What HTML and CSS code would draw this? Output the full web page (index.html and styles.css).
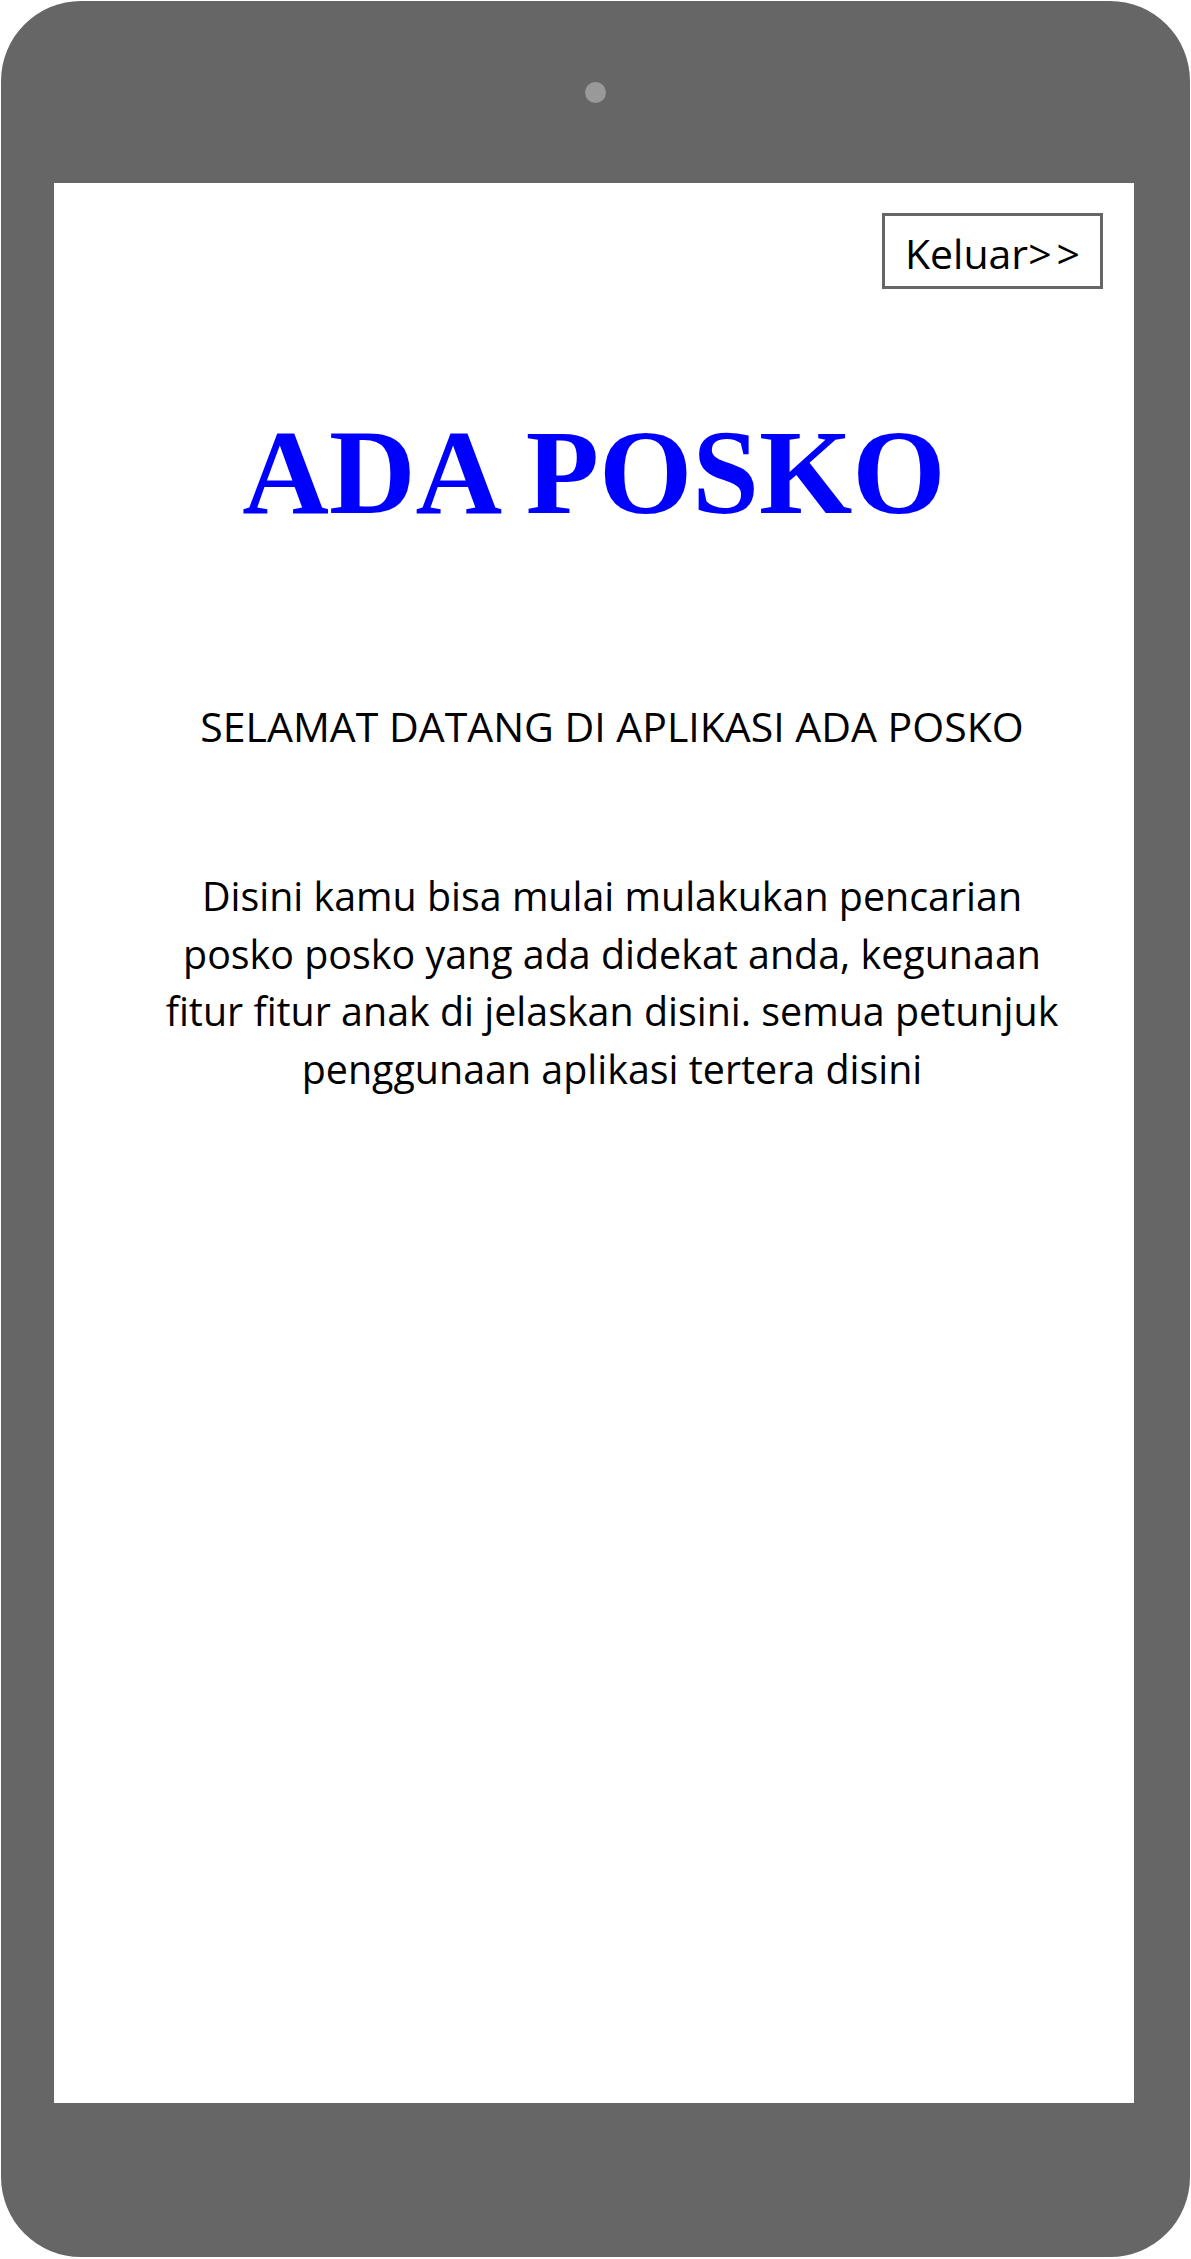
FILE: index.html
```html
<!DOCTYPE html>
<html lang="id">
<head>
<meta charset="utf-8">
<title>ADA POSKO</title>
<link rel="stylesheet" href="styles.css">
</head>
<body>
<div class="phone">
  <div class="camera"></div>
  <div class="screen">
    <div class="topbar">
      <button class="logout">Keluar<span class="gap">&gt;</span>&gt;</button>
    </div>
    <h1 class="title">ADA POSKO</h1>
    <div class="info">
      <p class="welcome">SELAMAT DATANG DI APLIKASI ADA POSKO</p>
      <p class="desc">Disini kamu bisa mulai mulakukan pencarian<br>posko posko yang ada didekat anda, kegunaan<br>fitur fitur anak di jelaskan disini. semua petunjuk<br>penggunaan aplikasi tertera disini</p>
    </div>
  </div>
</div>
</body>
</html>
```

FILE: styles.css
```css
html, body {
  margin: 0;
  padding: 0;
  background: #ffffff;
}

body {
  padding: 1px 0 0 1px;
  font-family: "Open Sans", "Noto Sans", sans-serif;
}

.phone {
  width: 1189px;
  height: 2256px;
  background: #666666;
  border-radius: 80px;
  display: flex;
  flex-direction: column;
  align-items: center;
  box-sizing: border-box;
}

.camera {
  width: 21px;
  height: 21px;
  border-radius: 50%;
  background: #999999;
  margin-top: 81px;
  margin-bottom: 80px;
}

.screen {
  width: 1080px;
  height: 1920px;
  align-self: flex-start;
  margin-left: 53px;
  background: #ffffff;
  display: flex;
  flex-direction: column;
  align-items: center;
}

.topbar {
  align-self: stretch;
  display: flex;
  justify-content: flex-end;
  padding: 30px 31px 0 0;
}

.logout {
  width: 221px;
  height: 76px;
  border: 3px solid #666666;
  background: #ffffff;
  font-family: "Open Sans", "Noto Sans", sans-serif;
  font-size: 41px;
  color: #000000;
  padding: 3px 0 0 0;
  margin: 0;
}

.gap {
  margin-right: 5px;
}

.title {
  margin: 124px 0 0 0;
  font-family: "Liberation Serif", "Times New Roman", serif;
  font-weight: bold;
  font-size: 120px;
  line-height: 120px;
  color: #0000ff;
}

.info {
  align-self: stretch;
  padding-left: 36px;
  display: flex;
  flex-direction: column;
  align-items: center;
}

.welcome {
  margin: 166px 0 0 0;
  font-size: 41px;
  line-height: 54px;
  color: #000000;
  white-space: nowrap;
}

.desc {
  margin: 115px 0 0 0;
  text-align: center;
  font-size: 39.4px;
  line-height: 57.5px;
  color: #000000;
  white-space: nowrap;
}
```
